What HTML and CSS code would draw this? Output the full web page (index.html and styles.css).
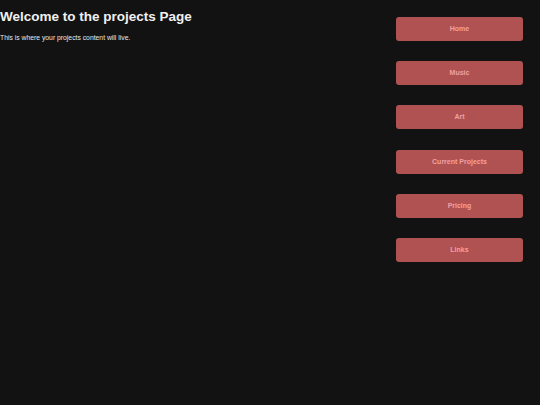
FILE: index.html
```html
<!DOCTYPE html>
<html lang="en">
<head>
  <meta charset="UTF-8" />
  <meta name="viewport" content="width=device-width, initial-scale=1.0" />
  <title>Projects</title>
  <link rel="stylesheet" href="styles.css">
</head>
<body>

  <div class="pagina">
    <main class="conteudo">
      <h1>Welcome to the projects Page</h1>
      <p>This is where your projects content will live.</p>
    </main>

    <nav class="menu">
      <a href="#" class="botao">Home</a>
      <a href="#" class="botao">Music</a>
      <a href="#" class="botao">Art</a>
      <a href="#" class="botao">Current Projects</a>
      <a href="#" class="botao">Pricing</a>
      <a href="#" class="botao">Links</a>
    </nav>
  </div>

</body>
</html>
```

FILE: styles.css
```css
body {
  font-family: "Liberation Sans", Arial, sans-serif;
  margin: 0;
  background-color: #121212;
  color: #f0f0f0;
}

.pagina {
  display: flex;
  justify-content: space-between;
  align-items: flex-start;
  min-height: 405px;
}

.conteudo h1 {
  font-size: 13.5px;
  margin: 9px 0 0;
  line-height: 15px;
}

.conteudo p {
  font-size: 6.8px;
  margin: 10px 0 0;
  color: #e8e8e8;
}

/* Menu lateral */
.menu {
  display: flex;
  flex-direction: column;
  gap: 20.2px;
  width: 127px;
  margin: 17px 17px 0 0;
}

.botao {
  display: block;
  height: 24px;
  line-height: 24px;
  background-color: #b05252;
  color: #f2a0a0;
  border-radius: 3px;
  text-align: center;
  text-decoration: none;
  font-weight: bold;
  font-size: 7px;
}
```
